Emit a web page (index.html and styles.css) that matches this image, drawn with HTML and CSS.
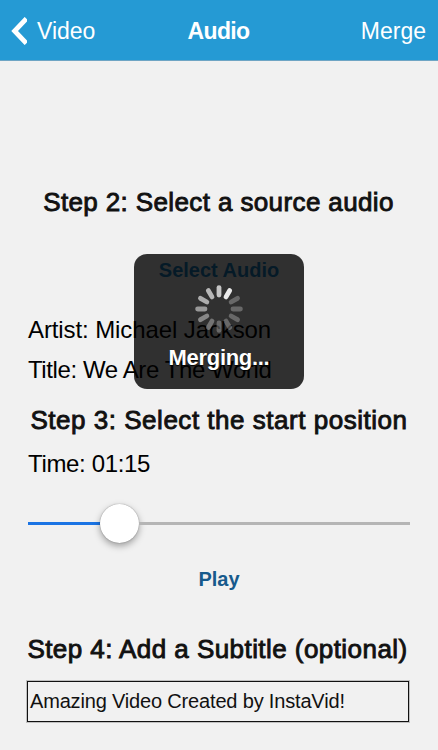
FILE: index.html
```
<!DOCTYPE html>
<html lang="en">
<head>
<meta charset="UTF-8">
<title>Audio</title>
<link rel="stylesheet" href="styles.css">
</head>
<body>
<div class="nav">
	<a class="back">
		<svg width="18" height="28" viewBox="0 0 18 28"><path d="M17.4 1.6L5.6 14l11.8 12.4" fill="none" stroke="#fff" stroke-width="4.8"/></svg>
		<span>Video</span>
	</a>
	<h1>Audio</h1>
	<a class="merge">Merge</a>
</div>
<div class="content">
	<h2 class="step2">Step 2: Select a source audio</h2>
	<a class="link select">Select Audio</a>
	<p class="artist">Artist: Michael Jackson</p>
	<p class="song">Title: We Are The World</p>
	<h2 class="step3">Step 3: Select the start position</h2>
	<p class="time">Time: 01:15</p>
	<div class="slider">
		<span class="played"></span>
		<span class="thumb"></span>
		<span class="rest"></span>
	</div>
	<a class="link play">Play</a>
	<h2 class="step4">Step 4: Add a Subtitle (optional)</h2>
	<div class="subtitle"><span>Amazing Video Created by InstaVid!</span></div>
</div>
<div class="hud">
	<svg width="50" height="50" viewBox="-25 -25 50 50" stroke="#fff" stroke-width="4.8" stroke-linecap="round">
		<path d="M0-14v-7.4" opacity=".72"/>
		<path d="M0-14v-7.4" opacity=".9" transform="rotate(30)"/>
		<path d="M0-14v-7.4" opacity=".27" transform="rotate(60)"/>
		<path d="M0-14v-7.4" opacity=".27" transform="rotate(90)"/>
		<path d="M0-14v-7.4" opacity=".27" transform="rotate(120)"/>
		<path d="M0-14v-7.4" opacity=".27" transform="rotate(150)"/>
		<path d="M0-14v-7.4" opacity=".27" transform="rotate(180)"/>
		<path d="M0-14v-7.4" opacity=".32" transform="rotate(210)"/>
		<path d="M0-14v-7.4" opacity=".42" transform="rotate(240)"/>
		<path d="M0-14v-7.4" opacity=".5" transform="rotate(270)"/>
		<path d="M0-14v-7.4" opacity=".6" transform="rotate(300)"/>
		<path d="M0-14v-7.4" opacity=".65" transform="rotate(330)"/>
	</svg>
	<p>Merging...</p>
</div>
</body>
</html>
```
FILE: styles.css
```
body,h1,h2,p{
	margin: 0;
	padding: 0;
}
body{
	height: 750px;
	overflow: hidden;
	background: #f1f1f1;
	color: #111;
	font-family: "Liberation Sans", Arial, sans-serif;
	white-space: nowrap;
}
.nav{
	box-sizing: border-box;
	height: 61px;
	padding: 1px 12px 0 9px;
	display: grid;
	grid-template-columns: 1fr auto 1fr;
	align-items: center;
	background: #259ad4;
	border-bottom: 1px solid #6fa5c4;
	color: #fff;
	font-size: 23px;
	line-height: 30px;
}
.nav h1{
	font-size: 23px;
	font-weight: bold;
	letter-spacing: -0.6px;
	padding-left: 2px;
}
.back{
	display: flex;
	align-items: center;
	gap: 10px;
}
.merge{
	text-align: right;
}
.content{
	padding: 0 28px;
	display: flex;
	flex-direction: column;
}
.content h2{
	height: 32px;
	line-height: 32px;
	font-size: 26px;
	font-weight: normal;
	-webkit-text-stroke: 0.9px #111;
	align-self: center;
}
.content p{
	height: 30px;
	line-height: 30px;
	font-size: 24px;
	color: #000;
}
.content .step2{
	margin-top: 125px;
	margin-right: 1px;
	letter-spacing: 0.38px;
}
.link{
	align-self: center;
	height: 26px;
	line-height: 26px;
	font-size: 20px;
	font-weight: bold;
	color: #175a8c;
}
.select{
	margin-top: 39px;
	color: #1a82c0;
}
.artist{
	margin-top: 32px;
	letter-spacing: -0.1px;
}
.song{
	margin-top: 10px;
	letter-spacing: -0.4px;
}
.content .step3{
	margin-top: 19px;
	letter-spacing: 0.52px;
}
.time{
	margin-top: 13px;
	letter-spacing: -0.35px;
}
.slider{
	height: 40px;
	margin-top: 24px;
	display: flex;
	align-items: center;
}
.played{
	width: 72px;
	height: 3px;
	background: #1b74e4;
}
.thumb{
	width: 39px;
	height: 39px;
	border-radius: 50%;
	background: #fff;
	box-shadow: 0 0 1px rgba(0,0,0,.5), 0 3px 7px rgba(0,0,0,.35);
}
.rest{
	flex: 1;
	height: 3px;
	background: #b5b5b5;
}
.play{
	margin-top: 23px;
}
.content .step4{
	margin-top: 41px;
	margin-right: 3px;
	letter-spacing: 0.44px;
}
.subtitle{
	box-sizing: border-box;
	width: 382px;
	height: 41px;
	margin-top: 16px;
	margin-left: -1px;
	padding-left: 2px;
	border: 1px solid #111;
	box-shadow: 0 0 0 1px rgba(0,0,0,.2);
	line-height: 39px;
	font-size: 20px;
	letter-spacing: -0.17px;
}
/* progress box over the page */
.hud{
	position: absolute;
	left: 134px;
	top: 254px;
	box-sizing: border-box;
	width: 170px;
	height: 135px;
	padding-top: 30px;
	border-radius: 13px;
	background: rgba(0,0,0,.8);
	display: flex;
	flex-direction: column;
	align-items: center;
}
.hud p{
	margin-top: 10px;
	line-height: 28px;
	font-size: 22px;
	font-weight: bold;
	letter-spacing: -0.3px;
	color: #fff;
	text-shadow: 0 1px 1px #000;
}
```
